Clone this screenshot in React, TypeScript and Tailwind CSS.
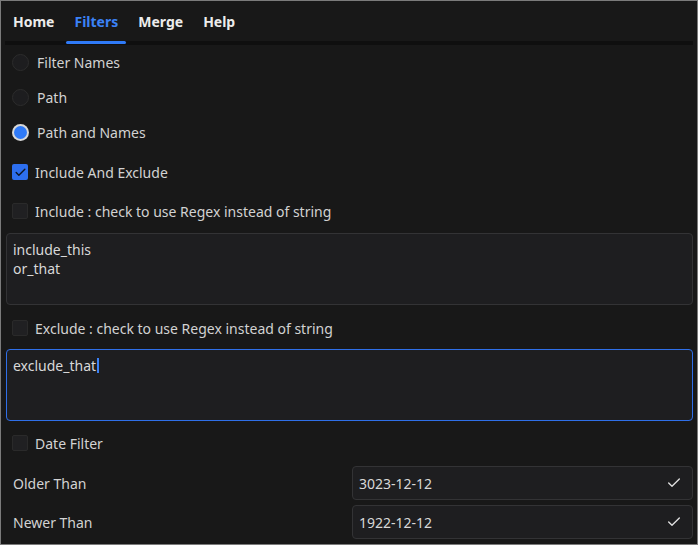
import { Check } from "lucide-react";

const font = { fontFamily: '"Noto Sans", "Open Sans", sans-serif' };

const Radio = ({ label, checked }: { label: string; checked?: boolean }) => (
  <div className="flex h-[35px] items-center pl-[11px]">
    {checked ? (
      <span className="flex h-[17px] w-[17px] items-center justify-center rounded-full bg-[#d8d8d8]">
        <span className="h-[13px] w-[13px] rounded-full bg-[#2f7af7]" />
      </span>
    ) : (
      <span className="h-[17px] w-[17px] rounded-full border border-[#2c2c2c] bg-[#1d1d1f]" />
    )}
    <span className="ml-[8px] text-[14px] text-[#d2d2d2]">{label}</span>
  </div>
);

const CheckRow = ({ label, checked, className }: { label: string; checked?: boolean; className?: string }) => (
  <div className={`flex h-[24px] items-center pl-[11px] ${className ?? ""}`}>
    {checked ? (
      <span className="flex h-[16px] w-[16px] items-center justify-center rounded-[2px] bg-[#2d6ff0]">
        <Check size={13} strokeWidth={2.6} className="text-[#0d1626]" />
      </span>
    ) : (
      <span className="h-[16px] w-[16px] rounded-[2px] border border-[#2a2a2a] bg-[#202022]" />
    )}
    <span className="ml-[7px] text-[14px] text-[#d2d2d2]">{label}</span>
  </div>
);

const DateRow = ({ label, value, className }: { label: string; value: string; className?: string }) => (
  <div className={`flex items-center pr-[4px] ${className ?? ""}`}>
    <span className="ml-[12px] w-[339px] text-[14px] text-[#d2d2d2]">{label}</span>
    <div className="flex h-[34px] flex-1 items-center justify-between rounded-[4px] border border-[#333335] bg-[#1e1e20] pl-[6px] pr-[10px]">
      <span className="text-[14px] text-[#d8d8d8]">{value}</span>
      <Check size={16} strokeWidth={2} className="text-[#e0e0e0]" />
    </div>
  </div>
);

export default function App() {
  const tabs = ["Home", "Filters", "Merge", "Help"];
  return (
    <div style={font} className="h-[545px] w-[698px] overflow-hidden border border-[#7b7b7b] bg-[#181818]">
      <div className="flex h-[40px] gap-[4px] pl-[4px]">
        {tabs.map((t) => (
          <div
            key={t}
            className={`relative flex items-center px-[8px] text-[14px] font-bold ${
              t === "Filters" ? "text-[#3b82f6]" : "text-[#ececec]"
            }`}
          >
            {t}
            {t === "Filters" && (
              <span className="absolute left-0 right-0 top-[40px] z-10 h-[3px] rounded-full bg-[#2f7af7]" />
            )}
          </div>
        ))}
      </div>
      <div className="mx-[4px] h-[4px] bg-[#0f0f0f]" />

      <Radio label="Filter Names" />
      <Radio label="Path" />
      <Radio label="Path and Names" checked />

      <CheckRow label="Include And Exclude" checked className="mt-[10px]" />
      <CheckRow label="Include : check to use Regex instead of string" className="mt-[15px]" />

      <div className="ml-[5px] mr-[4px] mt-[10px] h-[72px] rounded-[4px] border border-[#333335] bg-[#1e1e20] px-[6px] pt-[6px] text-[14px] leading-[19px] text-[#d8d8d8]">
        <div>include_this</div>
        <div>or_that</div>
      </div>

      <CheckRow label="Exclude : check to use Regex instead of string" className="mt-[11px]" />

      <div className="ml-[5px] mr-[4px] mt-[9px] h-[72px] rounded-[4px] border border-[#2f6fe8] bg-[#1e1e20] px-[6px] pt-[6px] text-[14px] leading-[19px] text-[#d8d8d8]">
        <span>exclude_that</span>
        <span className="ml-[1px] inline-block h-[15px] w-[1.5px] translate-y-[2px] bg-[#3b82f6]" />
      </div>

      <CheckRow label="Date Filter" className="mt-[10px]" />

      <DateRow label="Older Than" value="3023-12-12" className="mt-[11px]" />
      <DateRow label="Newer Than" value="1922-12-12" className="mt-[5px]" />
    </div>
  );
}
